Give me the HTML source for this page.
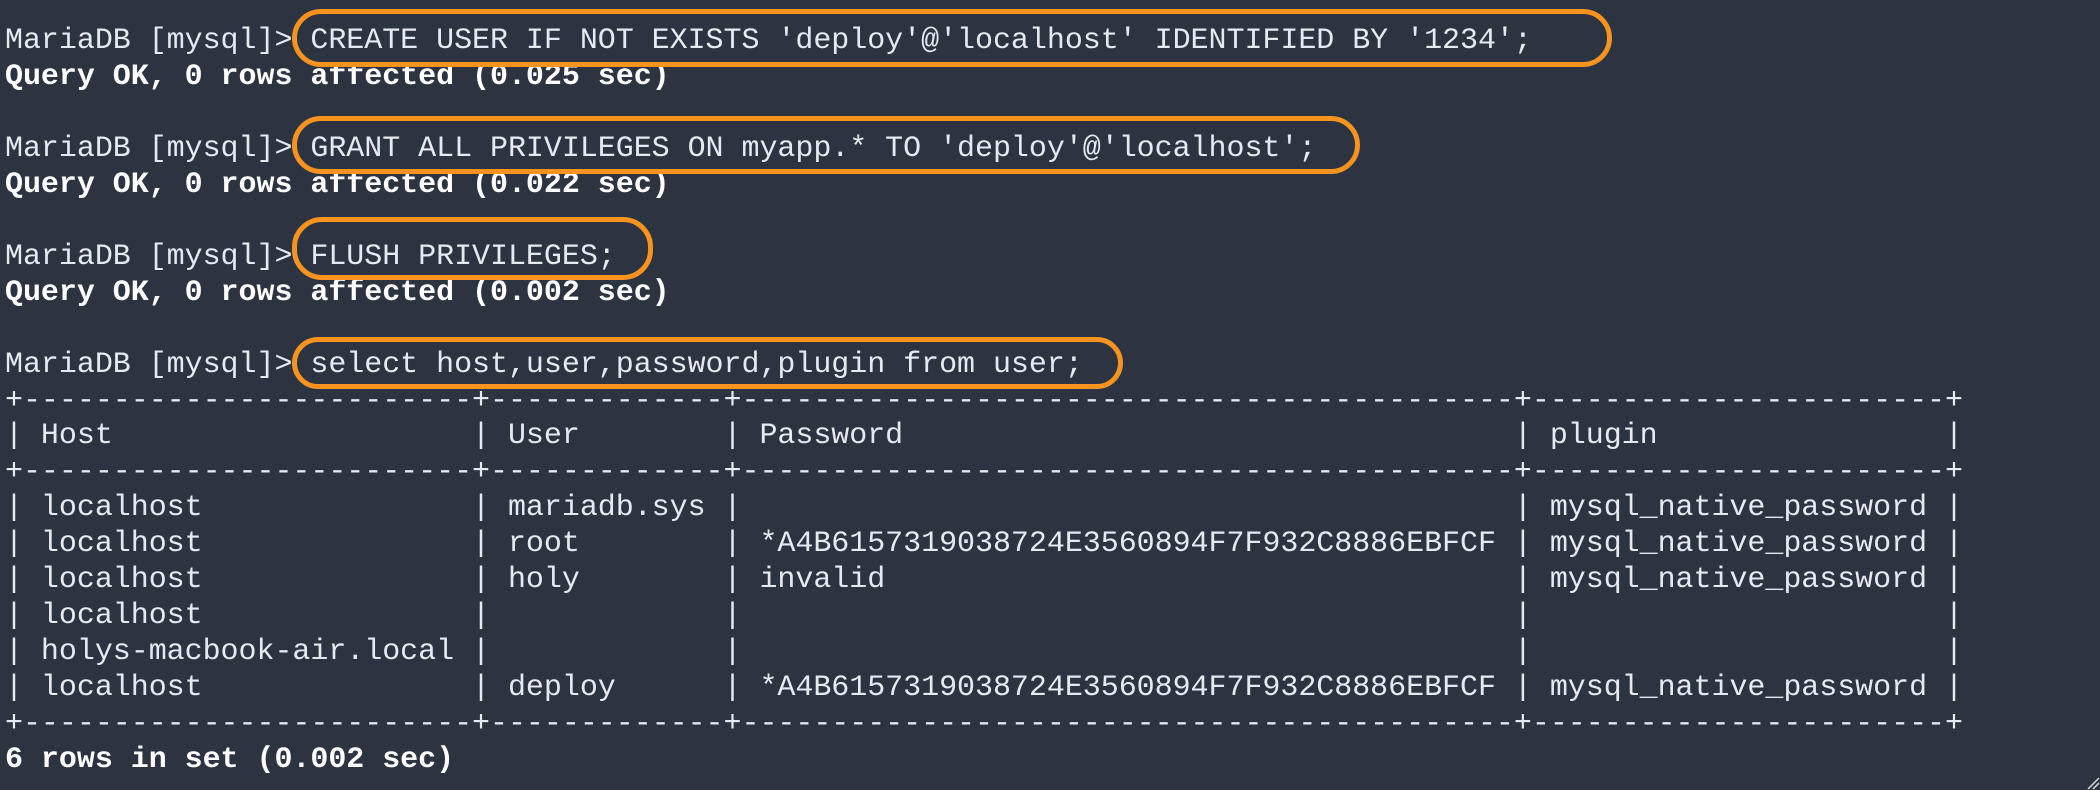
<!DOCTYPE html>
<html><head><meta charset="utf-8"><style>
html,body{margin:0;padding:0;width:2100px;height:790px;overflow:hidden;background:#2d3441;}
pre{position:absolute;left:5px;top:24px;margin:0;font-family:"Liberation Mono","DejaVu Sans Mono",monospace;font-size:30px;line-height:35.95px;letter-spacing:-0.04px;color:#e5e9f0;}
b{font-weight:bold;color:#ffffff;}
.o{position:absolute;border:5px solid #f7931e;border-radius:30px;box-sizing:border-box;}
</style></head><body>
<pre>MariaDB [mysql]> CREATE USER IF NOT EXISTS 'deploy'@'localhost' IDENTIFIED BY '1234';
<b>Query OK, 0 rows affected (0.025 sec)</b>

MariaDB [mysql]> GRANT ALL PRIVILEGES ON myapp.* TO 'deploy'@'localhost';
<b>Query OK, 0 rows affected (0.022 sec)</b>

MariaDB [mysql]> FLUSH PRIVILEGES;
<b>Query OK, 0 rows affected (0.002 sec)</b>

MariaDB [mysql]> select host,user,password,plugin from user;
+-------------------------+-------------+-------------------------------------------+-----------------------+
| Host                    | User        | Password                                  | plugin                |
+-------------------------+-------------+-------------------------------------------+-----------------------+
| localhost               | mariadb.sys |                                           | mysql_native_password |
| localhost               | root        | *A4B6157319038724E3560894F7F932C8886EBFCF | mysql_native_password |
| localhost               | holy        | invalid                                   | mysql_native_password |
| localhost               |             |                                           |                       |
| holys-macbook-air.local |             |                                           |                       |
| localhost               | deploy      | *A4B6157319038724E3560894F7F932C8886EBFCF | mysql_native_password |
+-------------------------+-------------+-------------------------------------------+-----------------------+
<b>6 rows in set (0.002 sec)</b></pre>
<div class="o" style="left:292px;top:9px;width:1320px;height:58px;"></div>
<div class="o" style="left:292px;top:116px;width:1068px;height:58px;"></div>
<div class="o" style="left:292px;top:217px;width:361px;height:63px;"></div>
<div class="o" style="left:292px;top:337px;width:831px;height:52px;"></div>
<svg style="position:absolute;left:2086px;top:776px" width="14" height="14"><path d="M2 13 L13 2 M7 13 L13 7" stroke="#ddd" stroke-width="1.5"/></svg>
</body></html>
